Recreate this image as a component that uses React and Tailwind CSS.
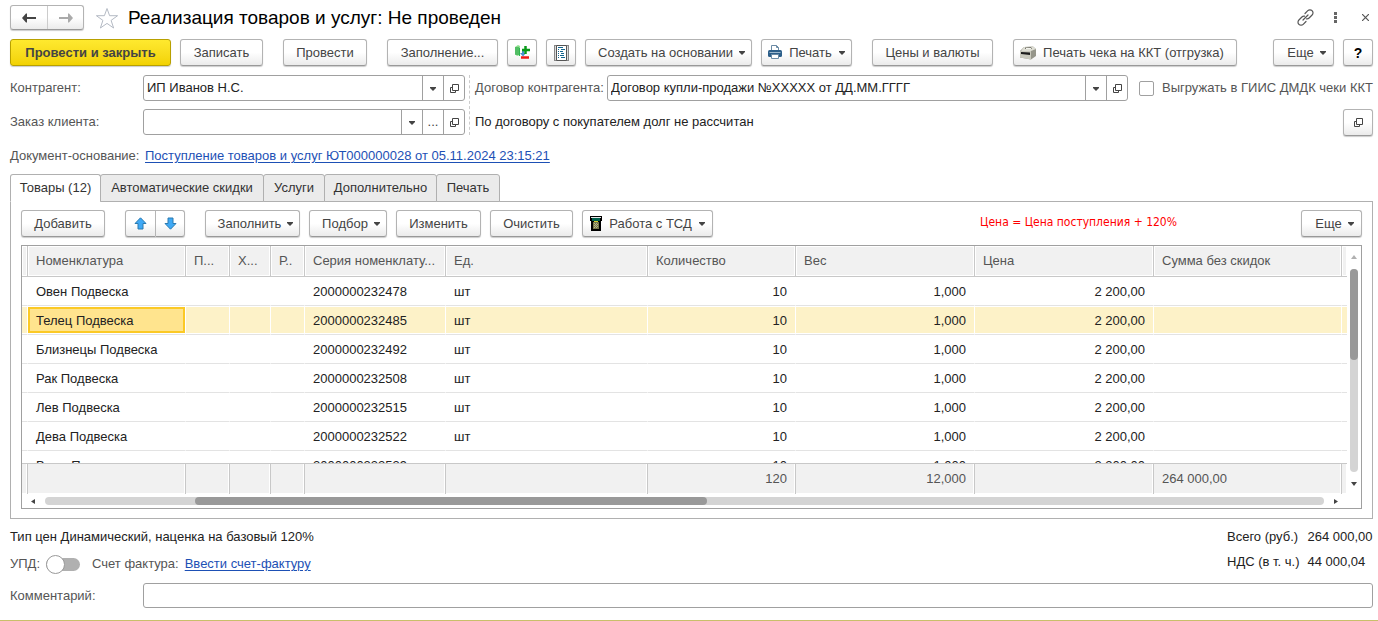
import { useState } from "react";

const COLUMNS = [
  { title: "", width: "w-[6px]" },
  { title: "Номенклатура", width: "w-[158px]" },
  { title: "П...", width: "w-[44px]" },
  { title: "Х...", width: "w-[41px]" },
  { title: "Р..", width: "w-[34px]" },
  { title: "Серия номенклату...", width: "w-[141px]" },
  { title: "Ед.", width: "w-[202px]" },
  { title: "Количество", width: "w-[148px]", right: true },
  { title: "Вес", width: "w-[179px]", right: true },
  { title: "Цена", width: "w-[179px]", right: true },
  { title: "Сумма без скидок", width: "" },
  { title: "", width: "w-[5px]" },
];

const ROWS = [
  ["Овен Подвеска", "2000000232478"],
  ["Телец Подвеска", "2000000232485"],
  ["Близнецы Подвеска", "2000000232492"],
  ["Рак Подвеска", "2000000232508"],
  ["Лев Подвеска", "2000000232515"],
  ["Дева Подвеска", "2000000232522"],
  ["Весы Подвеска", "2000000232539"],
];

const TOTALS = ["", "", "", "", "", "", "", "120", "12,000", "", "264 000,00", ""];

const TABS = [
  { name: "Товары (12)", width: "w-[91px]" },
  { name: "Автоматические скидки", width: "w-[164px]" },
  { name: "Услуги", width: "w-[62px]" },
  { name: "Дополнительно", width: "w-[113px]" },
  { name: "Печать", width: "w-[64px]" },
];

const BUTTON =
  "flex h-[27px] shrink-0 items-center justify-center rounded-[3px] border border-[#b3b3b3] border-b-[#999] bg-linear-to-b from-white from-50% to-[#ebebeb] text-[#444] shadow-[0_1px_1px_#ccc] whitespace-nowrap";

const Button = ({ className = "", children, ...rest }) => (
  <button type="button" className={BUTTON + " " + className} {...rest}>
    {children}
  </button>
);

const Caret = () => (
  <svg className="mt-px shrink-0" width="6" height="4" viewBox="0 0 6 4" fill="#444">
    <path d="M0 0h6v1L3 4 0 1z" />
  </svg>
);

const OpenIcon = () => (
  <svg width="9" height="9" viewBox="0 0 9 9" fill="none" stroke="#444">
    <path d="M2.500.5h6v6h-6zM2 3.500H.5v5h5V7" />
  </svg>
);

const ArrowIcon = ({ color, flip }) => (
  <svg className={flip ? "rotate-180" : ""} width="14" height="10" viewBox="0 0 14 10">
    <path d="M14 4v2H5v3.500H4L0 5 4 .5h1V4z" fill={color} />
  </svg>
);

const BlueArrow = ({ down }) => (
  <svg className={down ? "rotate-180" : ""} width="13" height="13" viewBox="0 0 13 13">
    <path d="M6.500.8L12 6.500H9v5.500H4V6.500H1z" fill="#3fa9f5" stroke="#2a7ab0" />
  </svg>
);

const PrinterIcon = () => (
  <svg width="14" height="15" viewBox="0 0 14 15">
    <path d="M3.500 6V.5h5l2 2V6" fill="#fff" stroke="#6a8aa5" />
    <path d="M8.500.5v2h2" fill="none" stroke="#6a8aa5" />
    <rect x="0" y="5" width="14" height="7" rx="1.500" fill="#2d5f8a" />
    <path d="M1.500 7.500h11" stroke="#9db8cd" />
    <path d="M3.500 9.500h7v4h-7z" fill="#fff" stroke="#6a8aa5" />
  </svg>
);

const FillIcon = () => (
  <svg width="16" height="15" viewBox="0 0 16 15">
    <path d="M1 2l3-2 2 1v9l-3 1-2-2z" fill="#8ee08e" />
    <path d="M1 3h4M1 5h4M1 7h4M1 9h4" stroke="#179c3c" />
    <path d="M5.500 3v8" stroke="#2eb84e" />
    <path d="M6 8l3 3.500 3-3.500H10V6H8v2z" fill="#4a90d0" />
    <path d="M11.500 1v8M8 5h8" stroke="#0a9a1a" strokeWidth="2.500" />
    <path d="M7 12.500h8" stroke="#f01818" strokeWidth="2.500" />
  </svg>
);

const ReportIcon = () => (
  <svg width="15" height="16" viewBox="0 0 15 16" fill="none">
    <rect x=".5" y=".5" width="14" height="15" fill="#ddd" stroke="#888" />
    <path d="M2.500.5v15h10V.5z" fill="#fff" stroke="#555" />
    <path d="M4 2.500h5M7 4.500h4M6 6.500h3M7 8.500h3M6 10.500h4M7 12.500h4" stroke="#15668f" />
    <path d="M4 4.500h1M4 6.500h1M4 8.500h1M4 10.500h1M4 12.500h1" stroke="#15668f" />
  </svg>
);

const CashIcon = () => (
  <svg width="16" height="14" viewBox="0 0 16 14">
    <path d="M0 5l4-4 9-.5L16 3v7l-5 3.500-11-2z" fill="#96968a" />
    <path d="M4 1l9-.5L16 3l-5 2H1z" fill="#deded4" />
    <path d="M5 1.500l6-.5 1 2H5z" fill="#77776e" />
    <path d="M6 2h5v1H6z" fill="#f4f4ee" />
    <path d="M0 5h11v8.500L0 11.500z" fill="#c9c9bd" />
    <path d="M1 6l9 .5V9L1 8z" fill="#1c1c1c" />
  </svg>
);

const TerminalIcon = () => (
  <svg width="12" height="15" viewBox="0 0 12 15" shapeRendering="crispEdges">
    <path d="M0 0h12v5h-1v10H1V5H0z" fill="#000" />
    <path d="M1 1h10v1H1z" fill="#e8e8e8" />
    <path d="M2 2h8v3H2z" fill="#00604c" />
    <path d="M4 5h4v1H4z" fill="#d8d030" />
    <path d="M3 6h6v7H3z" fill="#77774c" />
    <path d="M4 7h1v1H4zM6 7h1v1H6zM5 8h1v1H5zM7 8h1v1H7zM4 9h1v1H4zM6 9h1v1H6zM5 10h1v1H5zM7 10h1v1H7zM4 11h1v1H4zM6 11h1v1H6z" fill="#b5b58c" />
  </svg>
);

// Text box with its row of drop-down / choose / open buttons
const Field = ({ id, value, dots, className }) => (
  <div className={"flex h-[26px] rounded-[3px] border border-[#a0a0a0] bg-white " + className}>
    <input id={id} className="w-full min-w-0 flex-1 px-[3px] text-[#222] outline-none" type="text" defaultValue={value} />
    <button type="button" aria-label="Выбрать из списка" className="flex w-[21px] items-center justify-center border-l border-[#a0a0a0]">
      <Caret />
    </button>
    {dots && (
      <button type="button" className="w-[21px] border-l border-[#a0a0a0] text-[#444]">...</button>
    )}
    <button type="button" aria-label="Открыть" className="flex w-[21px] items-center justify-center border-l border-[#a0a0a0]">
      <OpenIcon />
    </button>
  </div>
);

const Columns = () => (
  <colgroup>
    {COLUMNS.map((column, i) => <col key={i} className={column.width} />)}
  </colgroup>
);

const GoodsTable = () => {

  const [selected, setSelected] = useState(1);

  return (
    <div className="mt-[8px] flex border border-[#a0a0a0]">
      <div className="min-w-0 flex-1">
        <div className="h-[217px] overflow-hidden">
          <table className="w-full table-fixed border-separate border-spacing-0">
            <Columns />
            <thead>
              <tr className="h-[31px]">
                {COLUMNS.map((column, i) => (
                  <th key={i} className="border-r border-b border-[#c8c8c8] bg-[#f1f1f1] p-0 text-left font-normal whitespace-nowrap text-[#555] shadow-[inset_0_0_0_1px_#fff] last:border-r-0">
                    <div className={column.title ? "pl-[8px]" : ""}>{column.title}</div>
                  </th>
                ))}
              </tr>
            </thead>
            <tbody>
              {ROWS.map(([name, series], index) => {
                const cells = ["", name, "", "", "", series, "шт", "10", "1,000", "2 200,00", "", ""];
                const active = index === selected;
                return (
                  <tr key={series} className="h-[29px]" onClick={() => setSelected(index)}>
                    {cells.map((cell, i) => (
                      <td
                        key={i}
                        className={
                          "border-r border-b border-r-white border-b-[#e3e3e3] p-0 whitespace-nowrap text-[#222] last:border-r-0 " +
                          (COLUMNS[i].right ? "text-right " : "") +
                          (active ? "bg-[#fdf2c8] shadow-[inset_0_1px_0_#fff,inset_0_-1px_0_#fff]" : "")
                        }>
                        <div
                          className={
                            active && i === 1
                              ? "h-[26px] border-2 border-[#fbc926] bg-[#ffe48e] px-[6px] leading-[24px]"
                              : cell ? "px-[8px] pt-[2px]" : ""
                          }>
                          {cell}
                        </div>
                      </td>
                    ))}
                  </tr>
                );
              })}
            </tbody>
          </table>
        </div>
        <table className="w-full table-fixed border-separate border-spacing-0" aria-label="Итоги">
          <Columns />
          <tbody>
            <tr className="h-[31px]">
              {TOTALS.map((total, i) => (
                <td
                  key={i}
                  className={
                    "border-t border-r border-[#c8c8c8] bg-[#f1f1f1] p-0 whitespace-nowrap text-[#555] shadow-[inset_-1px_-1px_0_#fff] last:border-r-0 " +
                    (COLUMNS[i].right ? "text-right" : "")
                  }>
                  <div className={total ? "px-[8px]" : ""}>{total}</div>
                </td>
              ))}
            </tr>
          </tbody>
        </table>
        <div className="flex h-[14px] items-center gap-[10px] px-[9px]">
          <svg width="4" height="5" viewBox="0 0 4 5" fill="#444"><path d="M4 0v5L0 2.500z" /></svg>
          <div className="h-[8px] flex-1 rounded-full bg-[#d4d4d4]">
            <div className="ml-[150px] h-full w-[40%] rounded-full bg-[#999]" />
          </div>
          <svg width="4" height="5" viewBox="0 0 4 5" fill="#444"><path d="M0 0v5l4-2.500z" /></svg>
        </div>
      </div>
      <div className="flex w-[14px] flex-col items-center pt-[9px] pb-[22px]">
        <svg width="6" height="4" viewBox="0 0 6 4" fill="#b0b0b0"><path d="M0 4h6L3 0z" /></svg>
        <div className="my-[10px] w-[8px] flex-1 rounded-full bg-[#d4d4d4]">
          <div className="h-[45%] rounded-full bg-[#999]" />
        </div>
        <svg width="6" height="4" viewBox="0 0 6 4" fill="#444"><path d="M0 0h6L3 4z" /></svg>
      </div>
    </div>
  );
};

const App = () => {

  const [tab, setTab] = useState(TABS[0].name);

  return (
    <div className="border-b border-[#c9bf6a] bg-white pt-[5px] pr-[5px] pb-[12px] pl-[10px] font-['Liberation_Sans',Arial,sans-serif] text-[13px] leading-[16px] text-[#555]">
      <header className="flex h-[25px] items-center">
        <div className="flex h-[25px] rounded-[3px] border border-[#b3b3b3] border-b-[#999] bg-linear-to-b from-white from-50% to-[#ebebeb] shadow-[0_1px_1px_#ccc]">
          <button type="button" aria-label="Назад" className="flex w-[36px] items-center justify-center"><ArrowIcon color="#444" /></button>
          <button type="button" aria-label="Вперед" className="flex w-[36px] items-center justify-center border-l border-[#ccc]"><ArrowIcon color="#aaa" flip /></button>
        </div>
        <button type="button" aria-label="В избранное" className="ml-[11px]">
          <svg width="24" height="22" viewBox="0 0 24 22" fill="none" stroke="#b4bac4">
            <path d="M12 1.500l2.600 7.200h8l-6.500 4.700 2.500 7.600L12 16.400 5.400 21l2.500-7.600L1.400 8.700h8z" />
          </svg>
        </button>
        <h1 className="ml-[9px] flex-1 text-[19px] leading-[24px] text-black">Реализация товаров и услуг: Не проведен</h1>
        <button type="button" aria-label="Ссылка" className="mr-[20px]">
          <svg width="17" height="17" viewBox="0 0 17 17" fill="none" stroke="#555" strokeWidth="1.200" strokeLinecap="round">
            <path d="M6 11l5-5M8 4.500l2.800-2.800a3 3 0 0 1 4.300 0 3 3 0 0 1 0 4.300l-3 3a3 3 0 0 1-2.600.8M9 12.500l-2.800 2.800a3 3 0 0 1-4.300 0 3 3 0 0 1 0-4.300l3-3a3 3 0 0 1 2.600-.8" />
          </svg>
        </button>
        <button type="button" aria-label="Меню" className="mr-[25px]">
          <svg width="3" height="11" viewBox="0 0 3 11" fill="#666"><path d="M0 0h3v3H0zM0 4h3v3H0zM0 8h3v3H0z" /></svg>
        </button>
        <button type="button" aria-label="Закрыть" className="mr-[4px]">
          <svg width="7" height="7" viewBox="0 0 7 7" stroke="#555" strokeWidth="1.200"><path d="M0 0l7 7M7 0L0 7" /></svg>
        </button>
      </header>

      <div className="mt-[9px] flex">
        <button type="button" className="h-[27px] w-[161px] rounded-[3px] border border-[#b8a000] bg-linear-to-b from-[#ffe92e] to-[#f2d200] font-bold text-[#444] shadow-[0_1px_1px_#ccc]">
          Провести и закрыть
        </button>
        <Button className="ml-[9px] w-[83px]">Записать</Button>
        <Button className="ml-[20px] w-[84px]">Провести</Button>
        <Button className="ml-[20px] w-[111px]">Заполнение...</Button>
        <Button className="ml-[9px] w-[30px]" aria-label="Подобрать"><FillIcon /></Button>
        <Button className="ml-[9px] w-[30px]" aria-label="Отчет"><ReportIcon /></Button>
        <Button className="ml-[9px] w-[167px] gap-[6px] pl-[6px]">Создать на основании <Caret /></Button>
        <Button className="ml-[9px] w-[91px] gap-[7px]"><PrinterIcon /> Печать <Caret /></Button>
        <Button className="ml-[20px] w-[121px]">Цены и валюты</Button>
        <Button className="ml-[20px] w-[224px] gap-[7px] pr-[6px]"><CashIcon /> Печать чека на ККТ (отгрузка)</Button>
        <Button className="ml-auto w-[61px] gap-[6px] pl-[6px]">Еще <Caret /></Button>
        <Button className="ml-[9px] w-[30px] font-bold"><span className="text-[14px] text-black">?</span></Button>
      </div>

      <div className="mt-[9px] flex">
        <div className="flex w-[460px] shrink-0 flex-col gap-[8px] border-r border-dashed border-[#ccc] pr-[4px]">
          <div className="flex items-center">
            <label htmlFor="contractor" className="w-[133px] shrink-0">Контрагент:</label>
            <Field id="contractor" value="ИП Иванов Н.С." className="flex-1" />
          </div>
          <div className="flex items-center">
            <label htmlFor="order" className="w-[133px] shrink-0">Заказ клиента:</label>
            <Field id="order" value="" dots className="flex-1" />
          </div>
        </div>
        <div className="flex min-w-0 flex-1 flex-col gap-[8px] pl-[5px]">
          <div className="flex items-center">
            <label htmlFor="contract" className="w-[132px] shrink-0">Договор контрагента:</label>
            <Field id="contract" value="Договор купли-продажи №XXXXX от ДД.ММ.ГГГГ" className="flex-1" />
            <label className="ml-[11px] flex w-[234px] shrink-0 items-center justify-between whitespace-nowrap">
              <input type="checkbox" className="h-[15px] w-[15px] appearance-none rounded-[2px] border border-[#a0a0a0] bg-white checked:bg-[#ffe92e]" />
              Выгружать в ГИИС ДМДК чеки ККТ
            </label>
          </div>
          <div className="flex h-[26px] items-center justify-between text-[#222]">
            По договору с покупателем долг не рассчитан
            <Button className="w-[30px]" aria-label="Открыть расчеты"><OpenIcon /></Button>
          </div>
        </div>
      </div>

      <div className="mt-[13px] flex">
        <span className="w-[135px]">Документ-основание:</span>
        <a href="#" className="text-[#1d50b5] underline underline-offset-2">Поступление товаров и услуг ЮТ000000028 от 05.11.2024 23:15:21</a>
      </div>

      <div className="relative z-10 mt-[10px] -mb-px flex" role="tablist">
        {TABS.map(({ name, width }) => (
          <button
            key={name}
            type="button"
            role="tab"
            aria-selected={tab === name}
            onClick={() => setTab(name)}
            className={
              "-mr-px h-[28px] rounded-t-[3px] border border-[#b0b0b0] whitespace-nowrap text-[#333] " + width +
              (tab === name ? " border-b-white bg-white" : " bg-[#ebebeb]")
            }>
            {name}
          </button>
        ))}
      </div>

      <section className="border border-[#b0b0b0] px-[10px] pt-[8px] pb-[9px]">
        <div className="flex">
          <Button className="w-[84px]">Добавить</Button>
          <Button className="ml-[20px] w-[31px] rounded-r-none" aria-label="Вверх"><BlueArrow /></Button>
          <Button className="w-[29px] rounded-l-none border-l-0" aria-label="Вниз"><BlueArrow down /></Button>
          <Button className="ml-[20px] w-[95px] gap-[6px] pl-[6px]">Заполнить <Caret /></Button>
          <Button className="ml-[9px] w-[78px] gap-[6px] pl-[6px]">Подбор <Caret /></Button>
          <Button className="ml-[9px] w-[85px]">Изменить</Button>
          <Button className="ml-[9px] w-[83px]">Очистить</Button>
          <Button className="ml-[9px] w-[131px] gap-[7px]"><TerminalIcon /> Работа с ТСД <Caret /></Button>
          <p className="ml-auto pt-[4px] font-['DejaVu_Sans_Condensed','Noto_Sans',sans-serif] text-[12px] text-[#f00]">Цена = Цена поступления + 120%</p>
          <Button className="ml-[124px] w-[61px] gap-[6px] pl-[6px]">Еще <Caret /></Button>
        </div>
        <GoodsTable />
      </section>

      <footer>
        <div className="mt-[10px] flex justify-between text-[#222]">
          <div>
            <p>Тип цен Динамический, наценка на базовый 120%</p>
            <div className="mt-[7px] flex h-[24px] items-center text-[#555]">
              <label className="flex items-center gap-[6px]">
                УПД:
                <input
                  type="checkbox"
                  role="switch"
                  className="relative h-[13px] w-[34px] appearance-none rounded-full bg-[#b0b0b0] before:absolute before:-top-[3px] before:left-0 before:h-[19px] before:w-[19px] before:rounded-full before:border before:border-[#999] before:bg-white checked:before:left-[15px]" />
              </label>
              <span className="ml-[12px]">Счет фактура:</span>
              <a href="#" className="ml-[6px] text-[#1d50b5] underline underline-offset-2">Ввести счет-фактуру</a>
            </div>
          </div>
          <dl className="grid w-[146px] grid-cols-[auto_1fr] content-start gap-x-[8px] gap-y-[9px] whitespace-nowrap">
            <dt>Всего (руб.)</dt>
            <dd>264 000,00</dd>
            <dt>НДС (в т. ч.)</dt>
            <dd>44 000,04</dd>
          </dl>
        </div>
        <div className="mt-[7px] flex items-center">
          <label htmlFor="comment" className="w-[133px] shrink-0">Комментарий:</label>
          <input id="comment" type="text" className="h-[25px] min-w-0 flex-1 rounded-[3px] border border-[#a0a0a0] px-[3px] text-[#222] outline-none" />
        </div>
      </footer>
    </div>
  );
};

export default App;
